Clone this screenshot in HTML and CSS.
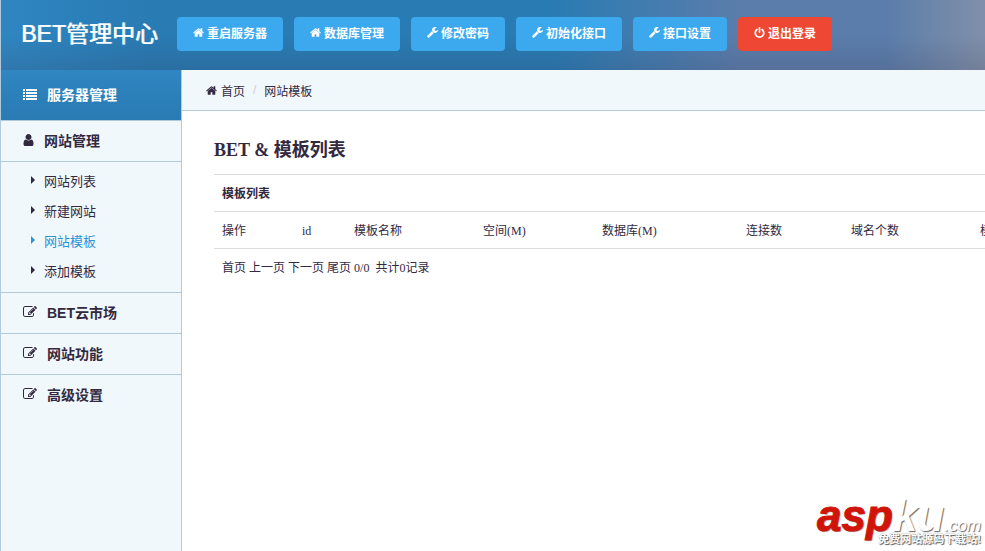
FILE: index.html
```html
<!DOCTYPE html>
<html lang="zh-CN">
<head>
  <meta charset="UTF-8">
  <title>BET管理中心</title>
  <meta name="viewport" content="width=device-width, initial-scale=1.0">
  <link rel="stylesheet" href="styles.css">
</head>
<body>

  <svg class="sprite" aria-hidden="true">
    <symbol id="i-home" viewBox="64 192 1664 1408"><path d="M1472 992v480q0 26-19 45t-45 19h-384v-384h-256v384h-384q-26 0-45-19t-19-45v-480q0-1 .5-3t.5-3l575-474 575 474q1 2 1 6zm223-69l-62 74q-8 9-21 11h-3q-13 0-21-7l-692-577-692 577q-12 8-24 7-13-2-21-11l-62-74q-8-10-7-23.5t11-21.5l719-599q32-26 76-26t76 26l244 204v-195q0-14 9-23t23-9h192q14 0 23 9t9 23v408l219 182q10 8 11 21.5t-7 23.5z"/></symbol>
    <symbol id="i-wrench" viewBox="64 128 1664 1664"><path d="M448 1472q0-26-19-45t-45-19-45 19-19 45 19 45 45 19 45-19 19-45zm644-420l-682 682q-37 37-90 37-52 0-91-37l-106-108q-38-36-38-90 0-53 38-91l681-681q39 98 114.5 173.5t173.5 114.5zm634-435q0 39-23 106-47 134-164.5 217.5t-258.5 83.5q-185 0-316.5-131.5t-131.5-316.5 131.5-316.5 316.5-131.5q58 0 121.5 16.5t107.5 46.5q16 11 16 28t-16 28l-293 169v224l193 107q5-3 79-48.5t135.5-81 70.5-35.5q15 0 23.5 10t8.5 25z"/></symbol>
    <symbol id="i-power" viewBox="64 0 1664 1664"><path d="M1664 896q0 156-61 298t-164 245-245 164-298 61-298-61-245-164-164-245-61-298q0-182 80.5-343t226.5-270q43-32 95.5-25t83.5 50q32 42 24.5 94.5t-49.5 84.5q-98 74-151.5 181t-53.5 228q0 104 40.5 198.5t109.5 163.5 163.5 109.5 198.5 40.5 198.5-40.5 163.5-109.5 109.5-163.5 40.5-198.5q0-121-53.5-228t-151.5-181q-42-32-49.5-84.5t24.5-94.5q31-43 84-50t95 25q146 109 226.5 270t80.5 343zm-640-768v640q0 52-38 90t-90 38-90-38-38-90v-640q0-52 38-90t90-38 90 38 38 90z"/></symbol>
    <symbol id="i-user" viewBox="256 128 1280 1536"><path d="M1536 1399q0 109-62.5 187t-150.5 78h-854q-88 0-150.5-78t-62.5-187q0-85 8.5-160.5t31.5-152 58.5-131 94-89 134.5-34.5q131 128 313 128t313-128q76 0 134.5 34.5t94 89 58.5 131 31.5 152 8.5 160.5zm-256-887q0 159-112.5 271.5t-271.5 112.5-271.5-112.5-112.5-271.5 112.5-271.5 271.5-112.5 271.5 112.5 112.5 271.5z"/></symbol>
    <symbol id="i-edit" viewBox="0 128 1792 1536"><path d="M888 1184l116-116-152-152-116 116v56h96v96h56zm440-720q-16-16-33 1l-350 350q-17 17-1 33t33-1l350-350q17-17 1-33zm80 594v190q0 119-84.5 203.5t-203.5 84.5h-832q-119 0-203.5-84.5t-84.5-203.5v-832q0-119 84.5-203.5t203.5-84.5h832q63 0 117 25 15 7 18 23 3 17-9 29l-49 49q-14 14-32 8-23-6-45-6h-832q-66 0-113 47t-47 113v832q0 66 47 113t113 47h832q66 0 113-47t47-113v-126q0-13 9-22l64-64q15-15 35-7t20 29zm-96-738l288 288-672 672h-288v-288zm444 132l-92 92-288-288 92-92q28-28 68-28t68 28l152 152q28 28 28 68t-28 68z"/></symbol>
    <symbol id="i-list" viewBox="0 0 14 11"><path d="M0 0h2v2H0zM3 0h11v2H3zM0 3h2v2H0zM3 3h11v2H3zM0 6h2v2H0zM3 6h11v2H3zM0 9h2v2H0zM3 9h11v2H3z"/></symbol>
  </svg>

  <header class="header">
    <h1 class="logo">BET管理中心</h1>
    <nav class="tools">
      <button type="button" class="btn"><svg class="icon"><use href="#i-home"/></svg>重启服务器</button>
      <button type="button" class="btn"><svg class="icon"><use href="#i-home"/></svg>数据库管理</button>
      <button type="button" class="btn"><svg class="icon"><use href="#i-wrench"/></svg>修改密码</button>
      <button type="button" class="btn"><svg class="icon"><use href="#i-wrench"/></svg>初始化接口</button>
      <button type="button" class="btn"><svg class="icon"><use href="#i-wrench"/></svg>接口设置</button>
      <button type="button" class="btn btn-red"><svg class="icon"><use href="#i-power"/></svg>退出登录</button>
    </nav>
  </header>

  <div class="layout">
    <aside class="sidebar">
      <h2 class="side-title"><svg class="icon-list"><use href="#i-list"/></svg>服务器管理</h2>
      <a href="#" class="group"><svg class="icon-user"><use href="#i-user"/></svg>网站管理</a>
      <ul class="submenu">
        <li><a href="#">网站列表</a></li>
        <li><a href="#">新建网站</a></li>
        <li><a href="#" class="active">网站模板</a></li>
        <li><a href="#">添加模板</a></li>
      </ul>
      <a href="#" class="group"><svg class="icon-edit"><use href="#i-edit"/></svg>BET云市场</a>
      <a href="#" class="group"><svg class="icon-edit"><use href="#i-edit"/></svg>网站功能</a>
      <a href="#" class="group"><svg class="icon-edit"><use href="#i-edit"/></svg>高级设置</a>
    </aside>

    <main class="main">
      <div class="breadcrumb">
        <a href="#"><svg class="icon"><use href="#i-home"/></svg>首页</a>
        <span class="sep">/</span>
        <a href="#">网站模板</a>
      </div>

      <div class="content">
        <h3>BET &amp; 模板列表</h3>
        <table class="table">
          <colgroup>
            <col class="col-action">
            <col class="col-id">
            <col class="col-name">
            <col class="col-space">
            <col class="col-db">
            <col class="col-conn">
            <col class="col-domain">
            <col>
          </colgroup>
          <thead>
            <tr><th colspan="8">模板列表</th></tr>
          </thead>
          <tbody>
            <tr>
              <td>操作</td>
              <td>id</td>
              <td>模板名称</td>
              <td>空间(M)</td>
              <td>数据库(M)</td>
              <td>连接数</td>
              <td>域名个数</td>
              <td>模板</td>
            </tr>
            <tr>
              <td colspan="8"><a href="#">首页</a> <a href="#">上一页</a> <a href="#">下一页</a> <a href="#">尾页</a> 0/0&nbsp; 共计0记录</td>
            </tr>
          </tbody>
        </table>
      </div>
    </main>
  </div>

  <div class="watermark">
    <div class="mark-name"><span class="mark-asp">asp</span><span class="mark-ku">ku</span><span class="mark-com">.com</span></div>
    <div class="mark-note">免费网站源码下载站!</div>
  </div>

</body>
</html>
```
FILE: styles.css
```css
* {
  box-sizing: border-box;
}

body {
  margin: 0;
  min-height: 100vh;
  display: flex;
  flex-direction: column;
  position: relative;
  overflow: hidden;
  border-left: 1px solid #b2cbdc;
  background: #fff;
  color: #33293f;
  font-family: "Liberation Sans", "Noto Sans CJK SC", sans-serif;
  font-size: 12px;
}

a {
  color: inherit;
  text-decoration: none;
}

svg {
  fill: currentColor;
  flex: none;
}

.sprite {
  display: none;
}

.icon {
  width: 11px;
  height: 11px;
}

/* header */
.header {
  display: flex;
  align-items: center;
  height: 70px;
  padding: 0 0 3px 20px;
  background:
    linear-gradient(to bottom, transparent 50%, rgba(50, 40, 65, 0.15)),
    linear-gradient(to right, #2f86c1 0, #297bb3 15%, #297bb3 56%, #5b7dab 75%, #5b7dab 90%, #8090a9 100%);
}

.logo {
  flex: none;
  width: 156px;
  margin: 0;
  color: #fff;
  font-size: 23px;
  line-height: 32px;
  font-weight: normal;
  white-space: nowrap;
  text-shadow: 1px 0 0 rgba(255, 255, 255, 0.8);
}

.tools {
  display: flex;
  gap: 11px;
}

.btn {
  display: flex;
  align-items: center;
  gap: 3px;
  height: 34px;
  padding: 0 16px 2px;
  border: none;
  border-radius: 4px;
  background: #3ca9ee;
  color: #fff;
  font-family: inherit;
  font-size: 12px;
  font-weight: bold;
  white-space: nowrap;
  cursor: pointer;
}

.btn:hover {
  background: #2f98db;
}

.btn-red,
.btn-red:hover {
  background: #ee4733;
}

/* sidebar */
.layout {
  display: flex;
  flex: 1;
}

.sidebar {
  flex: none;
  width: 181px;
  border-right: 1px solid #b2cbdc;
  background: #f1f8fc;
}

.side-title {
  display: flex;
  align-items: center;
  gap: 10px;
  height: 50px;
  margin: 0;
  padding: 0 0 2px 22px;
  background: linear-gradient(to bottom, #2f86c1, #297bb3);
  color: #fff;
  font-size: 14px;
}

.group {
  display: flex;
  align-items: center;
  gap: 10px;
  height: 41px;
  padding: 0 0 2px 22px;
  border-top: 1px solid #b2cbdc;
  font-size: 14px;
  font-weight: bold;
}

.icon-list {
  width: 14px;
  height: 11px;
}

.icon-user {
  width: 11px;
  height: 12px;
}

.icon-edit {
  width: 14px;
  height: 12px;
}

.submenu {
  margin: 0;
  padding: 3px 0 7px;
  border-top: 1px solid #b2cbdc;
  list-style: none;
  font-size: 13px;
}

.submenu a {
  display: flex;
  align-items: center;
  height: 30px;
  padding-left: 30px;
}

.submenu a::before {
  content: "";
  margin-right: 9px;
  border: 4px solid transparent;
  border-left-color: currentColor;
  border-right: 0;
}

.submenu .active {
  color: #2b93d6;
}

/* main */
.main {
  flex: 1;
  min-width: 0;
  overflow: hidden;
}

.breadcrumb {
  display: flex;
  align-items: center;
  gap: 8px;
  height: 41px;
  padding-left: 24px;
  border-bottom: 1px solid #b2cbdc;
  background: #f1f8fc;
}

.breadcrumb a {
  display: flex;
  align-items: center;
  gap: 4px;
}

.sep {
  color: #ccc;
}

.content {
  padding: 24px 32px;
  font-family: "Liberation Serif", "Noto Sans CJK SC", serif;
}

.content h3 {
  margin: 0 0 9px;
  font-size: 18px;
  line-height: 30px;
}

.table {
  width: 900px;
  table-layout: fixed;
  border-collapse: collapse;
}

.table th,
.table td {
  height: 37px;
  padding: 9px 8px 7px;
  border-top: 1px solid #ddd;
  line-height: 20px;
  text-align: left;
  white-space: nowrap;
}

.col-action { width: 80px; }
.col-id { width: 52px; }
.col-name { width: 129px; }
.col-space { width: 119px; }
.col-db { width: 144px; }
.col-conn { width: 105px; }
.col-domain { width: 129px; }

/* site mark in the corner */
.watermark {
  position: absolute;
  right: 4px;
  bottom: 6px;
  text-align: right;
  white-space: nowrap;
}

.mark-name {
  margin-bottom: -14px;
  font-style: italic;
  line-height: 40px;
}

.mark-asp,
.mark-ku {
  font-size: 44px;
  font-weight: bold;
}

.mark-asp {
  color: #d0140a;
  -webkit-text-stroke: 1px #d0140a;
  text-shadow: 1px 1px 1px #999;
}

.mark-ku,
.mark-com,
.mark-note {
  color: #fff;
  text-shadow: 1px 1px 1px #666;
}

.mark-com {
  font-size: 17px;
}

.mark-note {
  position: relative;
  font-size: 11px;
  font-weight: bold;
  line-height: 12px;
  text-shadow: 1px 1px 1px #555, 0 0 1px #888;
}
```
